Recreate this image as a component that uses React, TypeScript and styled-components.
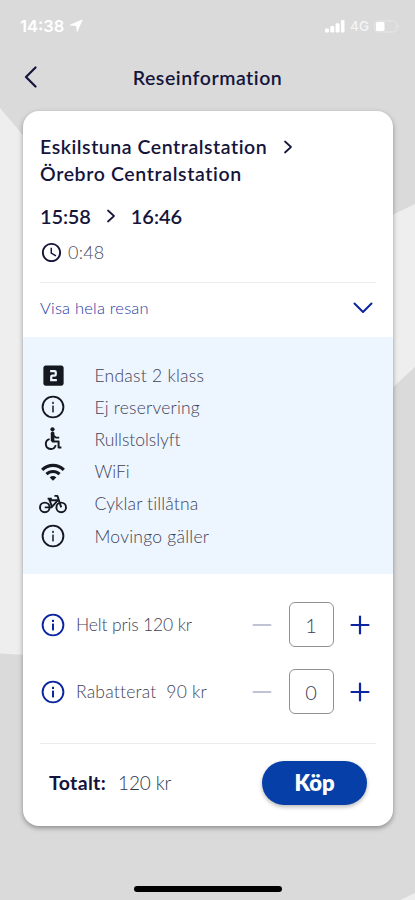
import React from "react";
import styled, { createGlobalStyle } from "styled-components";
import { MdAccessTime, MdLooksTwo, MdWifi } from "react-icons/md";

const GlobalStyle = createGlobalStyle`
  * { box-sizing: border-box; }
  body { margin: 0; background: #dadada; }
  button { font: inherit; border: 0; padding: 0; background: none; }
`;

const ink = "#15153b";
const blue = "#0b24a0";

const Screen = styled.main`
  position: relative;
  width: 415px;
  height: 900px;
  overflow: hidden;
  background: #dadada;
  color: ${ink};
  font-family: Lato, "Liberation Sans", sans-serif;
  display: flex;
  flex-direction: column;
`;

const Backdrop = styled.svg`
  position: absolute;
  inset: 0;
`;

const StatusBar = styled.div`
  position: relative;
  height: 52px;
  padding: 0 15px 0 20px;
  display: flex;
  align-items: center;
  justify-content: space-between;
  color: #fff;
`;

const StatusGroup = styled.div<{ $gap: number }>`
  display: flex;
  align-items: center;
  gap: ${(p) => p.$gap}px;
`;

const Label = styled.span<{
  $size: number;
  $weight?: number;
  $spacing?: number;
  $color?: string;
  $font?: string;
}>`
  margin: 0;
  font-size: ${(p) => p.$size}px;
  font-weight: ${(p) => p.$weight ?? 300};
  letter-spacing: ${(p) => p.$spacing ?? 0}px;
  color: ${(p) => p.$color ?? "inherit"};
  ${(p) => (p.$font ? `font-family: ${p.$font}, sans-serif;` : "")}
  white-space: pre;
`;

const Header = styled.header`
  position: relative;
  height: 59px;
  padding: 0 23px 9px;
  display: grid;
  grid-template-columns: 20px 1fr 20px;
  align-items: center;
  text-align: center;
`;

const Card = styled.section`
  position: relative;
  width: 370px;
  height: 715px;
  margin-left: 23px;
  border-radius: 16px;
  background: #fff;
  box-shadow: 0 2px 5px rgba(0, 0, 0, 0.36);
  display: flex;
  flex-direction: column;
`;

const Trip = styled.div`
  height: 172px;
  margin: 0 17px;
  padding-top: 22px;
  border-bottom: 1px solid #ededf0;
`;

const Line = styled.div<{ $height: number; $gap?: number }>`
  height: ${(p) => p.$height}px;
  display: flex;
  align-items: center;
  gap: ${(p) => p.$gap ?? 0}px;
`;

const Expand = styled.button`
  height: 54px;
  padding: 0 20px 4px 17px;
  display: flex;
  align-items: center;
  justify-content: space-between;
`;

const Facilities = styled.ul`
  list-style: none;
  margin: 0;
  height: 237px;
  padding: 22px 17px 0;
  background: #edf5ff;
`;

const Facility = styled.li`
  height: 32.2px;
  display: grid;
  grid-template-columns: 54.5px 1fr;
  align-items: center;
  color: #3f4358;
`;

const IconBox = styled.span<{ $color?: string }>`
  width: 26px;
  height: 28px;
  display: flex;
  align-items: center;
  justify-content: center;
  flex: none;
  color: ${(p) => p.$color ?? "#15181f"};
  svg {
    flex: none;
  }
`;

const Prices = styled.div`
  height: 170px;
  margin: 0 17px;
  padding-top: 17px;
  border-bottom: 1px solid #ededf0;
`;

const PriceRow = styled.div`
  height: 67px;
  display: flex;
  align-items: center;
  justify-content: space-between;
`;

const Stepper = styled.div`
  width: 118px;
  margin-right: 6px;
  display: flex;
  align-items: center;
  justify-content: space-between;
`;

const StepButton = styled.button`
  width: 20px;
  height: 20px;
  display: flex;
`;

const Count = styled.div`
  width: 45px;
  height: 45px;
  border: 1px solid #929292;
  border-radius: 6px;
  display: flex;
  align-items: center;
  justify-content: center;
  color: #3a3f55;
`;

const Footer = styled.footer`
  height: 78px;
  padding: 0 26px 1px 26px;
  display: flex;
  align-items: center;
  justify-content: space-between;
`;

const BuyButton = styled.button`
  width: 105px;
  height: 44px;
  border-radius: 22px;
  background: #063fa7;
  color: #fff;
  box-shadow: 0 2px 4px rgba(0, 0, 0, 0.28);
`;

const HomeBar = styled.div`
  position: relative;
  width: 148px;
  height: 6px;
  margin: 60px auto 0;
  border-radius: 3px;
  background: #000;
`;

type StrokeProps = { w: number; h: number; d: string; color?: string; stroke?: number };

function StrokeIcon({ w, h, d, color = ink, stroke = 2 }: StrokeProps) {
  return (
    <svg width={w} height={h} viewBox={`0 0 ${w} ${h}`} fill="none" stroke={color} strokeWidth={stroke} strokeLinecap="round" strokeLinejoin="round">
      <path d={d} />
    </svg>
  );
}

function InfoIcon({ mark = "currentColor" }: { mark?: string }) {
  return (
    <svg width="24" height="24" viewBox="0 0 24 24" fill="none">
      <circle cx="12" cy="12" r="10.4" stroke="currentColor" strokeWidth="1.9" />
      <rect x="11" y="6.8" width="2" height="2.2" fill={mark} />
      <rect x="11" y="10.6" width="2" height="6.8" fill={mark} />
    </svg>
  );
}

function WheelchairIcon() {
  return (
    <svg width="20" height="24" viewBox="0 0 20 24" fill="none" stroke="currentColor">
      <circle cx="9.5" cy="2.3" r="2.1" fill="currentColor" stroke="none" />
      <path d="M9.6 6.3v7" strokeWidth="3.6" strokeLinecap="round" />
      <path d="M10 8.2l3 2.4h3.2" strokeWidth="1.8" />
      <path d="M9 14.4h6.6v6.2h2.8" strokeWidth="2" strokeLinejoin="round" />
      <path d="M6.6 12.1a5 5 0 1 0 6.1 6" strokeWidth="1.9" />
    </svg>
  );
}

function BikeIcon() {
  return (
    <svg width="28" height="20" viewBox="0 0 28 20" fill="none" stroke="currentColor" strokeWidth="1.9" strokeLinejoin="round">
      <circle cx="5.8" cy="13.4" r="4.8" />
      <circle cx="22.2" cy="13.4" r="4.8" />
      <path d="M5.8 13.4h6.7L19 6.2H9.6M8.6 4.6h4.2M10.2 5l3 8.4M15.4 1.9h3l3.8 11.5" />
    </svg>
  );
}

const facilities = [
  { icon: <MdLooksTwo size={27} />, text: "Endast 2 klass", spacing: 0.25 },
  { icon: <InfoIcon mark="#4c5058" />, text: "Ej reservering", spacing: 0.2 },
  { icon: <WheelchairIcon />, text: "Rullstolslyft", spacing: -0.05 },
  { icon: <MdWifi size={26} />, text: "WiFi", spacing: 0 },
  { icon: <BikeIcon />, text: "Cyklar tillåtna", spacing: 0.15 },
  { icon: <InfoIcon mark="#4c5058" />, text: "Movingo gäller", spacing: 0.25 },
];

const prices = [
  { label: "Helt pris 120 kr", count: 1, spacing: -0.15 },
  { label: "Rabatterat  90 kr", count: 0, spacing: 0.2 },
];

export default function App() {
  return (
    <>
      <GlobalStyle />
      <Screen>
        <Backdrop width="415" height="900" viewBox="0 0 415 900" fill="#eee">
          <path d="M0 108 L44 160 V656 L0 653.5Z" />
          <path d="M380 221 L415 204 V367 L380 399Z" />
          <path d="M398 901 L415 893 V901Z" />
        </Backdrop>
        <StatusBar>
          <StatusGroup $gap={5}>
            <Label $size={16.5} $weight={600} $font="Inter">14:38</Label>
            <svg width="14" height="14" viewBox="0 0 14 14" fill="#fff">
              <path d="M13.8.2 8 13.8 7.2 7 0 6.2Z" />
            </svg>
          </StatusGroup>
          <StatusGroup $gap={5}>
            <svg width="20" height="13" viewBox="0 0 20 13" fill="#fff">
              <rect x="0" y="8.5" width="4" height="4" rx="1" />
              <rect x="5.3" y="6" width="4" height="6.5" rx="1" />
              <rect x="10.6" y="3.2" width="4" height="9.3" rx="1" />
              <rect x="16" y="0" width="3.5" height="12.5" rx="1" />
            </svg>
            <Label $size={13.5} $weight={500} $font="Inter" $color="#f4f4f4">4G</Label>
            <svg width="26" height="13" viewBox="0 0 26 13" fill="none">
              <rect x=".7" y="1" width="22" height="11" rx="3" stroke="#e6e6e6" />
              <path d="M24.3 4.5c1.4.5 1.4 3.5 0 4Z" fill="#e6e6e6" />
              <rect x="2" y="2" width="8.5" height="9" rx="1.5" fill="#fff" />
            </svg>
          </StatusGroup>
        </StatusBar>
        <Header>
          <StrokeIcon w={16} h={22} d="M12.5 1.5 3 11l9.5 9.5" stroke={2.2} />
          <Label as="h1" $size={19.5} $weight={600} $spacing={0.55}>Reseinformation</Label>
        </Header>
        <Card>
          <Trip>
            <Line $height={27} $gap={16}>
              <Label $size={19.5} $weight={600} $spacing={0.55}>Eskilstuna Centralstation</Label>
              <StrokeIcon w={10} h={14} d="M2 1.5 8 7l-6 5.5" stroke={1.7} />
            </Line>
            <Line $height={27}>
              <Label $size={19.5} $weight={600} $spacing={0.63}>Örebro Centralstation</Label>
            </Line>
            <Line $height={58} $gap={15}>
              <Label $size={20} $weight={600} $spacing={-0.15}>15:58</Label>
              <StrokeIcon w={10} h={14} d="M2 1.5 8 7l-6 5.5" stroke={1.7} />
              <Label $size={20} $weight={600} $spacing={0}>16:46</Label>
            </Line>
            <Line $height={14} $gap={5}>
              <MdAccessTime size={23} />
              <Label $size={18} $spacing={0.2} $color="#484d60">0:48</Label>
            </Line>
          </Trip>
          <Expand>
            <Label $size={16.5} $spacing={0.2} $color="#2539a5">Visa hela resan</Label>
            <StrokeIcon w={20} h={12} d="M1.5 1.5 10 10l8.5-8.5" color={blue} />
          </Expand>
          <Facilities>
            {facilities.map((f) => (
              <Facility key={f.text}>
                <IconBox>{f.icon}</IconBox>
                <Label $size={17.5} $spacing={f.spacing}>{f.text}</Label>
              </Facility>
            ))}
          </Facilities>
          <Prices>
            {prices.map((p) => (
              <PriceRow key={p.label}>
                <Line $height={28} $gap={10}>
                  <IconBox $color={blue}><InfoIcon /></IconBox>
                  <Label $size={17.5} $spacing={p.spacing} $color="#3f4358">{p.label}</Label>
                </Line>
                <Stepper>
                  <StepButton aria-label="Minska">
                    <StrokeIcon w={20} h={20} d="M1.5 10h17" color="#bfc3d4" />
                  </StepButton>
                  <Count><Label $size={20}>{p.count}</Label></Count>
                  <StepButton aria-label="Öka">
                    <StrokeIcon w={20} h={20} d="M1.5 10h17M10 1.5v17" color={blue} stroke={2.2} />
                  </StepButton>
                </Stepper>
              </PriceRow>
            ))}
          </Prices>
          <Footer>
            <Line $height={28} $gap={12}>
              <Label $size={19.5} $weight={700} $spacing={0.35}>Totalt:</Label>
              <Label $size={19} $spacing={-0.15} $color="#33384f">120 kr</Label>
            </Line>
            <BuyButton><Label $size={22} $weight={800}>Köp</Label></BuyButton>
          </Footer>
        </Card>
        <HomeBar />
      </Screen>
    </>
  );
}
